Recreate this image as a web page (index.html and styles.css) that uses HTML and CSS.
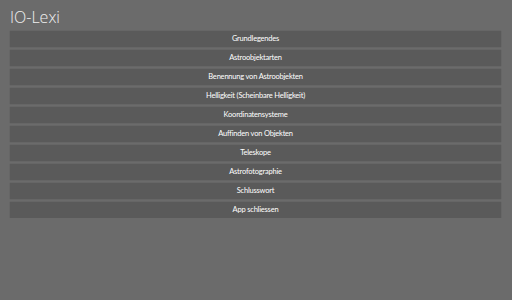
FILE: index.html
```html
<!DOCTYPE html>
<html lang="de">
<head>
  <meta charset="UTF-8" />
  <title>IO-Lexi</title>
  <link rel="stylesheet" href="styles.css">
</head>
<body>
  <div class="app">
    <h1>IO-Lexi</h1>
    <div class="menu">
      <button>Grundlegendes</button>
      <button>Astroobjektarten</button>
      <button>Benennung von Astroobjekten</button>
      <button>Helligkeit (Scheinbare Helligkeit)</button>
      <button>Koordinatensysteme</button>
      <button>Auffinden von Objekten</button>
      <button>Teleskope</button>
      <button>Astrofotographie</button>
      <button>Schlusswort</button>
      <button>App schliessen</button>
    </div>
  </div>
</body>
</html>
```

FILE: styles.css
```css
* {
  box-sizing: border-box;
}

body {
  margin: 0;
  background: #6b6b6b;
  font-family: 'Open Sans', sans-serif;
  color: #fff;
}

.app {
  padding: 8px 11px 0 10px;
}

h1 {
  margin: 0 0 4px;
  font-size: 16px;
  font-weight: 300;
  line-height: 19px;
  color: #f0f0f0;
}

.menu {
  display: flex;
  flex-direction: column;
  gap: 3px;
}

button {
  height: 16px;
  padding: 0;
  border: none;
  background: #5a5a5a;
  box-shadow: 0 0 1px rgba(0,0,0,0.25);
  color: #fff;
  font-family: Lato, sans-serif;
  font-size: 7.5px;
  letter-spacing: -0.2px;
  line-height: 16px;
  text-align: center;
  cursor: pointer;
}
```
